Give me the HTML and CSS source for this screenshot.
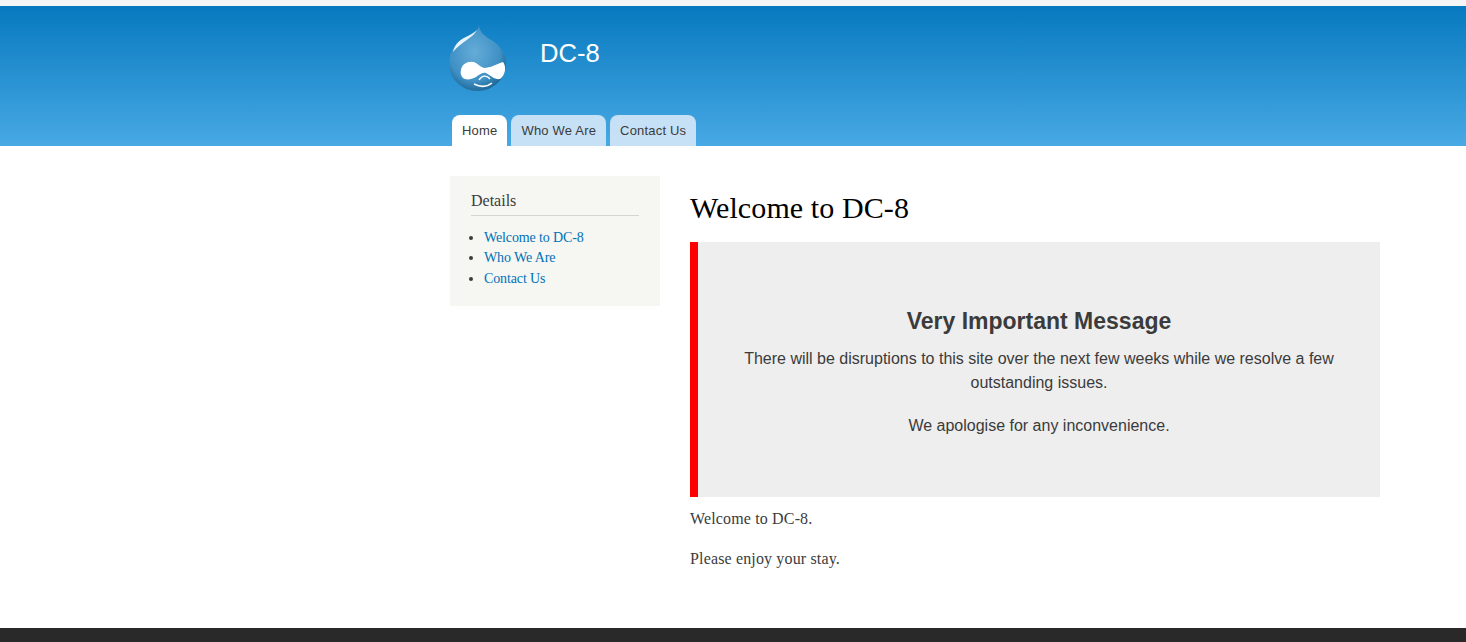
FILE: index.html
```html
<!DOCTYPE html>
<html>
<head>
    <title>Welcome to DC-8</title>
    <link rel="stylesheet" href="styles.css">
</head>
<body>
    <div class="toolbar"></div>
    <header class="site-header">
        <div class="container">
            <div class="branding">
                <svg class="logo" width="58" height="66" viewBox="0 0 58 66">
                    <defs>
                        <radialGradient id="drop" cx="45%" cy="40%" r="62%">
                            <stop offset="0" stop-color="#65acd8"/>
                            <stop offset="0.72" stop-color="#3f90c5"/>
                            <stop offset="1" stop-color="#1f6897"/>
                        </radialGradient>
                    </defs>
                    <path d="M30 0C31 7 37 11 44 15C52 21 57 29 57 37C57 53 44 65 28.5 65C13 65 0 53 0 37C0 25 7 17 15 12C22 8 29 5 30 0Z" fill="url(#drop)"/>
                    <path d="M28 4C24 12 12 16 4 26C6 17 12 13 19 10C23 8 26 6 28 4Z" fill="#e8f3fa"/>
                    <path d="M12 44C13 37 21 34 27 37C30 39 32 41 35 42C41 42 48 38 54 36C58 41 56 50 51 53C46 54 42 50 37 47C34 46 31 48 27 51C22 54 16 54 14 52C12 50 11 47 12 44Z" fill="#fff"/>
                    <path d="M30 54C33 49 38 49 41 53" fill="none" stroke="#fff" stroke-width="1.4"/>
                    <path d="M25 58C31 61 38 61 43 57" fill="none" stroke="#fff" stroke-width="1.6"/>
                </svg>
                <div class="site-name">DC-8</div>
            </div>
            <ul class="tabs">
                <li><a class="tab active" href="#">Home</a></li>
                <li><a class="tab" href="#">Who We Are</a></li>
                <li><a class="tab" href="#">Contact Us</a></li>
            </ul>
        </div>
    </header>

    <div class="container columns">
        <aside class="sidebar">
            <h2>Details</h2>
            <ul>
                <li><a href="#">Welcome to DC-8</a></li>
                <li><a href="#">Who We Are</a></li>
                <li><a href="#">Contact Us</a></li>
            </ul>
        </aside>
        <main class="content">
            <h1>Welcome to DC-8</h1>
            <div class="notice">
                <h3>Very Important Message</h3>
                <p>There will be disruptions to this site over the next few weeks while we resolve a few outstanding issues.</p>
                <p>We apologise for any inconvenience.</p>
            </div>
            <p class="copy">Welcome to DC-8.</p>
            <p class="copy">Please enjoy your stay.</p>
        </main>
    </div>

    <footer class="site-footer"></footer>
</body>
</html>
```
FILE: styles.css
```css
/* General styles */
* {
  box-sizing: border-box;
}

body {
  margin: 0;
  background-color: #fff;
  color: #3b3b3b;
  font-family: "Liberation Serif", serif;
  overflow: hidden;
}

.toolbar {
  height: 6px;
  background-color: #f6f6f6;
}

.container {
  width: 930px;
  margin-left: 450px;
}

/* Header */
.site-header {
  height: 140px;
  background: linear-gradient(#0779bf, #48a9e4);
}

.site-header .container {
  height: 100%;
  display: flex;
  flex-direction: column;
  justify-content: space-between;
}

.branding {
  display: flex;
  align-items: flex-start;
  margin-left: -1px;
  padding-top: 20px;
}

.logo {
  display: block;
}

.site-name {
  margin-left: 33px;
  margin-top: 12px;
  color: #fff;
  font-family: "Liberation Sans", sans-serif;
  font-size: 25.6px;
  line-height: 30px;
}

.tabs {
  display: flex;
  gap: 4px;
  list-style: none;
  margin: 0;
  padding: 0 0 0 2px;
}

.tab {
  display: block;
  height: 31px;
  padding: 0 10px;
  background-color: #c6e1f5;
  border-radius: 8px 8px 0 0;
  color: #3b3b3b;
  font-family: "Liberation Sans", sans-serif;
  font-size: 13px;
  letter-spacing: 0.19px;
  line-height: 31px;
  text-decoration: none;
}

.tab.active {
  background-color: #fff;
}

/* Columns */
.columns {
  display: flex;
  align-items: flex-start;
  gap: 30px;
  padding-top: 30px;
}

.sidebar {
  width: 210px;
  height: 130px;
  padding: 15px 21px 0;
  background-color: #f6f6f2;
}

.sidebar h2 {
  margin: 0;
  height: 25px;
  border-bottom: 1px solid #d6d6d0;
  font-size: 16px;
  font-weight: normal;
  line-height: 20px;
}

.sidebar ul {
  margin: 11.7px 0 0;
  padding: 0 0 0 13px;
  font-size: 14px;
  letter-spacing: -0.12px;
  line-height: 20.5px;
}

.sidebar a {
  color: #0071b8;
  text-decoration: none;
}

.content {
  width: 690px;
}

h1 {
  margin: 14px 0 16px;
  color: #000;
  font-size: 30px;
  font-weight: normal;
  letter-spacing: 0.1px;
  line-height: 36px;
}

.notice {
  height: 255px;
  padding: 64px 40px 0;
  background-color: #eee;
  border-left: 8px solid #f00;
  font-family: "Liberation Sans", sans-serif;
  text-align: center;
}

.notice h3 {
  margin: 0 0 11px;
  font-size: 23px;
  line-height: 30px;
}

.notice p {
  margin: 0 0 19px;
  font-size: 16px;
  line-height: 24px;
}

.copy {
  margin: 0 0 20px;
  font-size: 16px;
  letter-spacing: 0.15px;
  line-height: 20px;
}

.notice + .copy {
  margin-top: 12px;
}

.site-footer {
  position: fixed;
  left: 0;
  right: 0;
  top: 628px;
  bottom: 0;
  background-color: #292929;
}
```
